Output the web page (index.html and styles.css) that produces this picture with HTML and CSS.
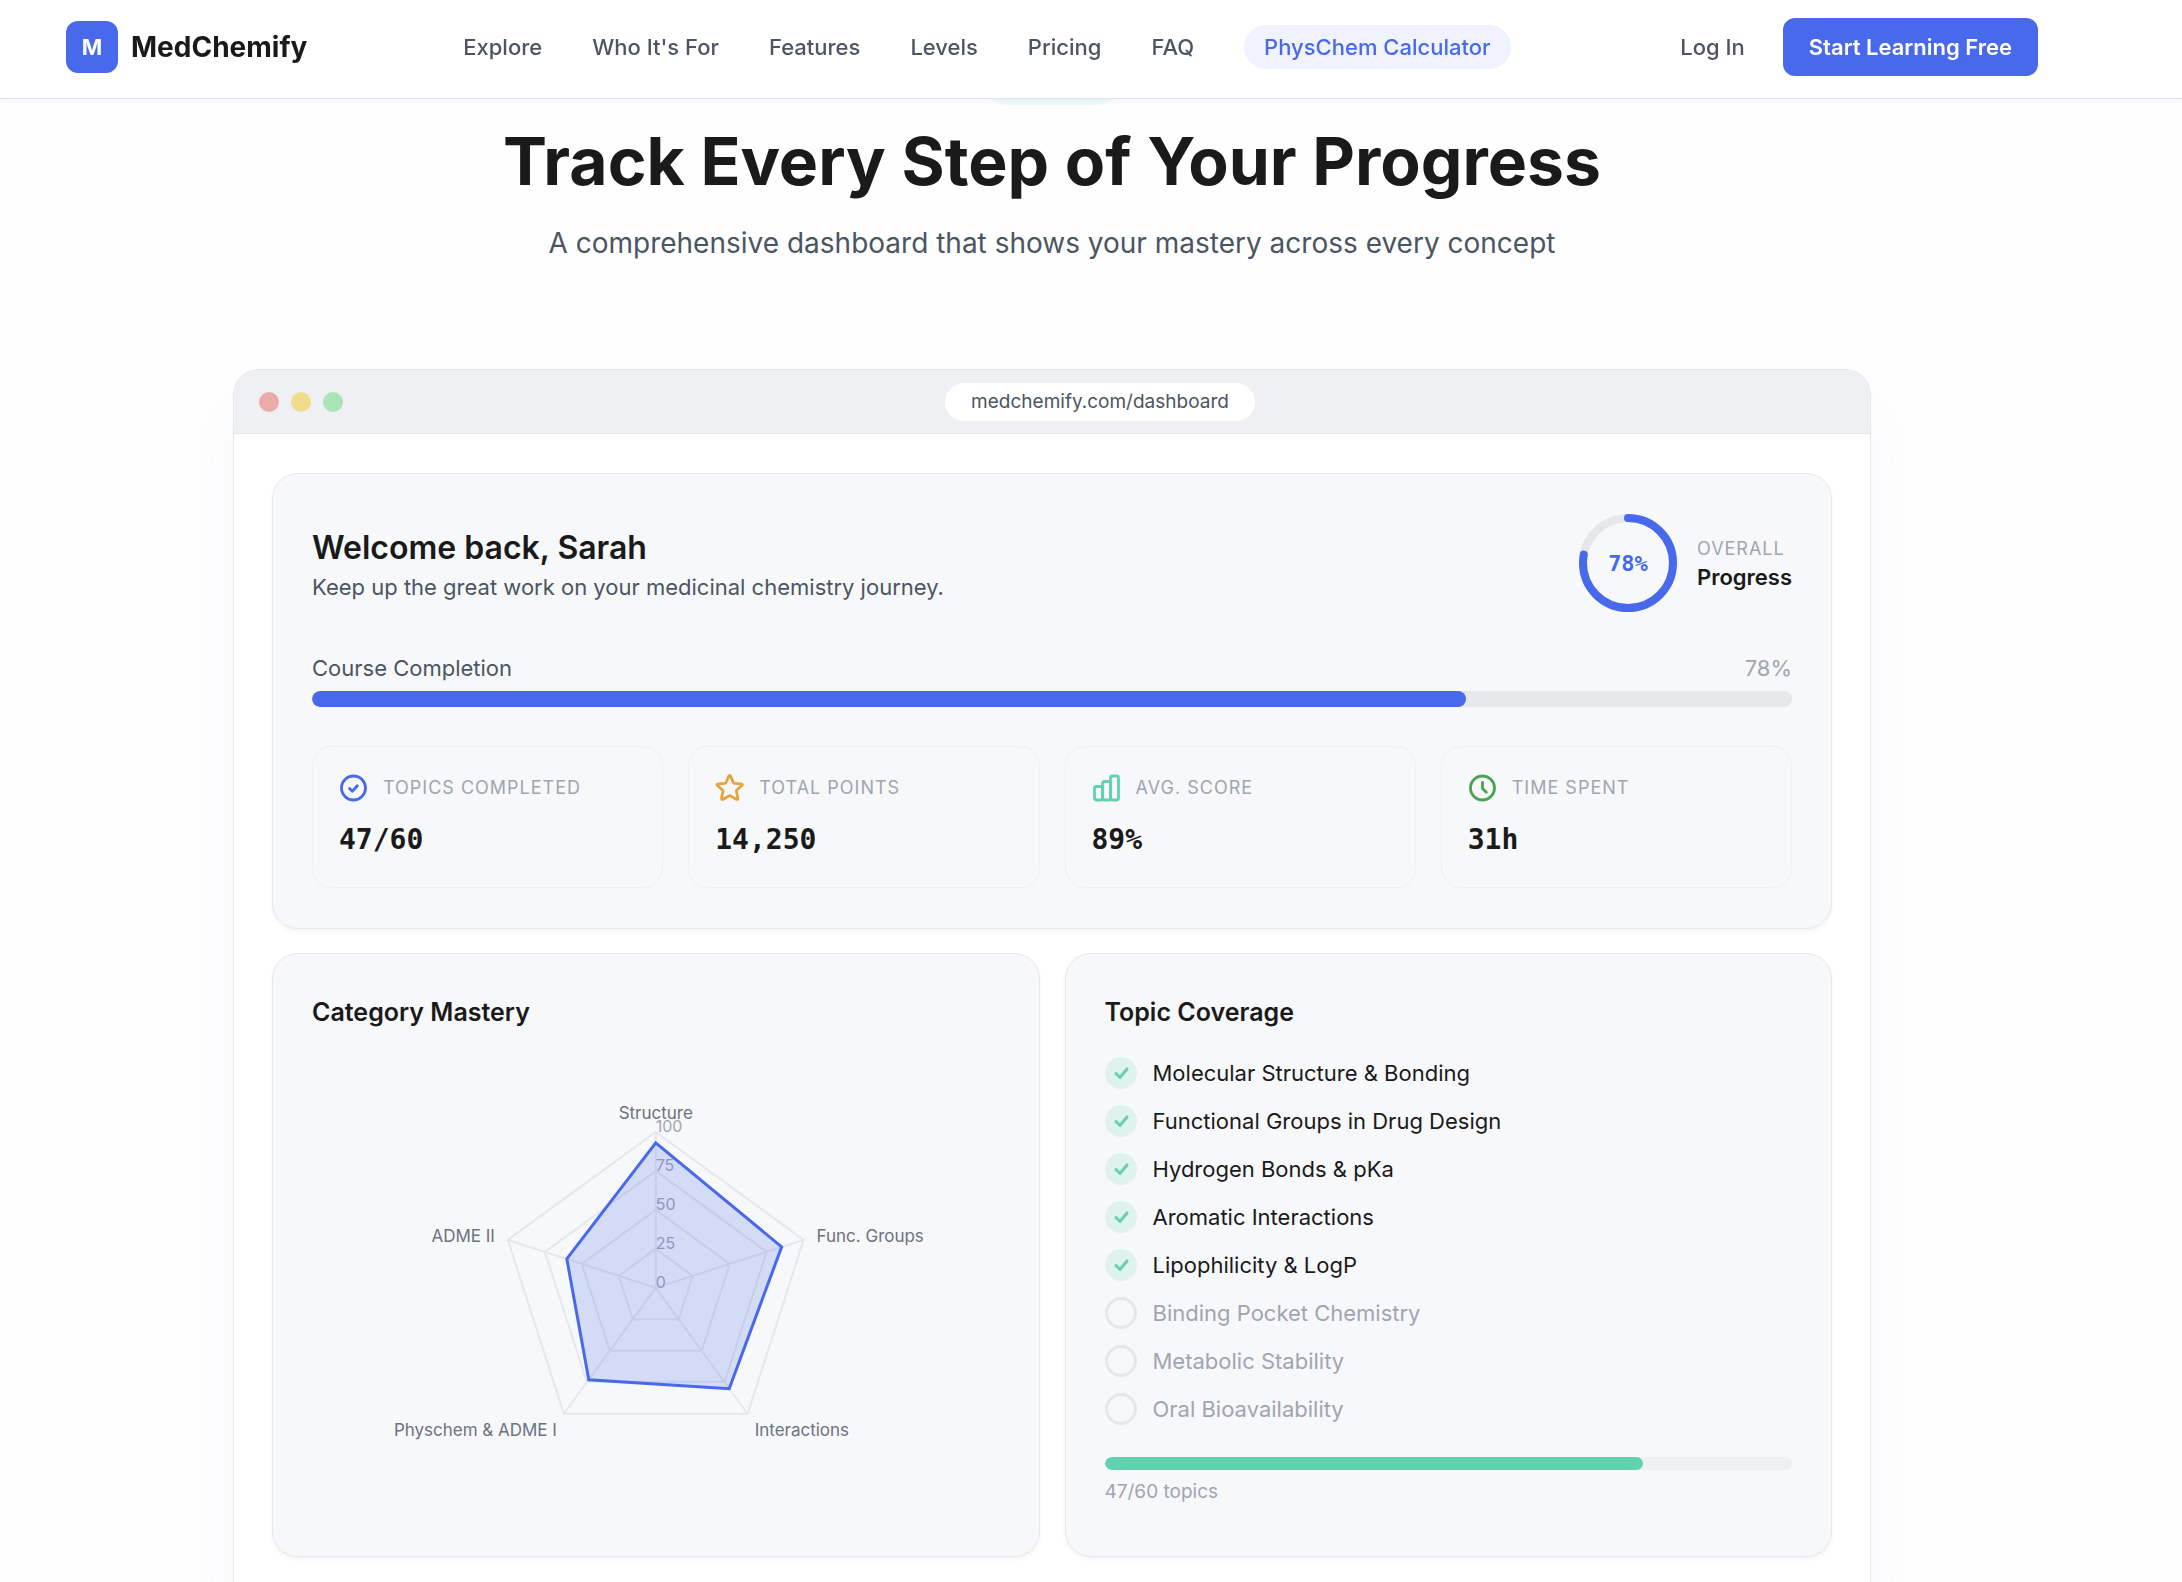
FILE: index.html
```html
<!DOCTYPE html>
<html lang="en">
<head>
<meta charset="utf-8">
<title>MedChemify</title>
<link rel="stylesheet" href="styles.css">
</head>
<body>
<header class="site-header">
  <a class="brand" href="#"><span class="brand-mark">M</span><span>MedChemify</span></a>
  <nav class="nav">
    <a href="#">Explore</a>
    <a href="#">Who It's For</a>
    <a href="#">Features</a>
    <a href="#">Levels</a>
    <a href="#">Pricing</a>
    <a href="#">FAQ</a>
    <a class="nav-pill" href="#">PhysChem Calculator</a>
  </nav>
  <div class="actions">
    <a href="#">Log In</a>
    <button class="cta" type="button">Start Learning Free</button>
  </div>
</header>

<main class="showcase">
  <div class="badge"></div>
  <h1>Track Every Step of Your Progress</h1>
  <p class="lead">A comprehensive dashboard that shows your mastery across every concept</p>

  <section class="window">
    <div class="window-bar">
      <div class="dots"><i class="dot red"></i><i class="dot yellow"></i><i class="dot green"></i></div>
      <div class="url">medchemify.com/dashboard</div>
    </div>

    <div class="dashboard">
      <section class="card overview">
        <div class="welcome">
          <div>
            <h2>Welcome back, Sarah</h2>
            <p>Keep up the great work on your medicinal chemistry journey.</p>
          </div>
          <div class="overall">
            <svg class="ring" viewBox="0 0 98 98" role="img" aria-label="78%">
              <circle cx="49" cy="49" r="45" fill="none" stroke="#e5e7eb" stroke-width="8"/>
              <circle cx="49" cy="49" r="45" fill="none" stroke="#4869eb" stroke-width="8" stroke-linecap="round" pathLength="100" stroke-dasharray="78 100" transform="rotate(-90 49 49)"/>
              <text class="ring-text" x="49" y="57" text-anchor="middle">78%</text>
            </svg>
            <div>
              <div class="eyebrow">OVERALL</div>
              <div class="overall-name">Progress</div>
            </div>
          </div>
        </div>

        <div class="completion">
          <div class="completion-head"><span>Course Completion</span><span class="muted">78%</span></div>
          <div class="track"><div class="fill" style="width:78%"></div></div>
        </div>

        <div class="stats">
          <div class="stat">
            <div class="stat-head">
              <svg class="icon" viewBox="0 0 29 29" stroke="#4869eb"><circle cx="14.500" cy="14" r="12"/><path d="M10.500 14.500l2.800 2.800 5-5.600"/></svg>
              <span class="eyebrow">TOPICS COMPLETED</span>
            </div>
            <div class="value">47/60</div>
          </div>
          <div class="stat">
            <div class="stat-head">
              <svg class="icon" viewBox="0 0 29 29" stroke="#e8a33d"><path d="M13.700 2.300Q14.700 .5 15.700 2.300L18.300 8.500Q18.600 9.200 19.400 9.300L26 9.900Q28.200 10.200 26.700 11.700L21.800 16Q21.200 16.500 21.400 17.300L22.800 23.800Q23.100 26.200 21.100 25.200L15.500 21.900Q14.700 21.400 13.900 21.900L8.300 25.200Q6.300 26.200 6.600 23.800L8 17.300Q8.200 16.500 7.600 16L2.700 11.700Q1.200 10.200 3.400 9.900L10 9.300Q10.800 9.200 11.100 8.500Z"/></svg>
              <span class="eyebrow">TOTAL POINTS</span>
            </div>
            <div class="value">14,250</div>
          </div>
          <div class="stat">
            <div class="stat-head">
              <svg class="icon" viewBox="0 0 29 29" stroke="#62d1ae"><rect x="2.500" y="12.500" width="8" height="13.500" rx="2"/><rect x="10.500" y="7.500" width="8" height="18.500" rx="2"/><rect x="18.500" y="2" width="8" height="24" rx="2"/></svg>
              <span class="eyebrow">AVG. SCORE</span>
            </div>
            <div class="value">89%</div>
          </div>
          <div class="stat">
            <div class="stat-head">
              <svg class="icon" viewBox="0 0 29 29" stroke="#4ba352"><circle cx="14.500" cy="14" r="12"/><path d="M14.500 8.500v6l3.800 3.800"/></svg>
              <span class="eyebrow">TIME SPENT</span>
            </div>
            <div class="value">31h</div>
          </div>
        </div>
      </section>

      <div class="panels">
        <section class="card panel">
          <h3>Category Mastery</h3>
          <svg class="radar" viewBox="0 0 688 440" role="img" aria-label="Category Mastery">
            <g class="grid">
              <path d="M344 70L492 178L436 352L252 352L196 178z"/>
              <path d="M344 109L455 190L413 320L275 320L233 190z"/>
              <path d="M344 148L418 202L390 289L298 289L270 202z"/>
              <path d="M344 187L381 214L367 257.500L321 257.500L307 214z"/>
              <path d="M344 226V70M344 226L492 178M344 226L436 352M344 226L252 352M344 226L196 178"/>
            </g>
            <g class="ticks">
              <text x="344" y="70">100</text>
              <text x="344" y="109">75</text>
              <text x="344" y="148">50</text>
              <text x="344" y="187">25</text>
              <text x="344" y="226">0</text>
            </g>
            <path class="area" d="M344 81L470 185L417.500 327L277 318L255 197z"/>
            <g class="labels">
              <text x="344" y="57" text-anchor="middle">Structure</text>
              <text x="505" y="180">Func. Groups</text>
              <text x="443" y="374">Interactions</text>
              <text x="245" y="374" text-anchor="end">Physchem &amp; ADME I</text>
              <text x="183" y="180" text-anchor="end">ADME II</text>
            </g>
          </svg>
        </section>

        <section class="card panel">
          <h3>Topic Coverage</h3>
          <ul class="topics">
            <li><span class="mark done"><svg viewBox="0 0 32 32"><path d="M11 16.500l4 4L22 12"/></svg></span>Molecular Structure &amp; Bonding</li>
            <li><span class="mark done"><svg viewBox="0 0 32 32"><path d="M11 16.500l4 4L22 12"/></svg></span>Functional Groups in Drug Design</li>
            <li><span class="mark done"><svg viewBox="0 0 32 32"><path d="M11 16.500l4 4L22 12"/></svg></span>Hydrogen Bonds &amp; pKa</li>
            <li><span class="mark done"><svg viewBox="0 0 32 32"><path d="M11 16.500l4 4L22 12"/></svg></span>Aromatic Interactions</li>
            <li><span class="mark done"><svg viewBox="0 0 32 32"><path d="M11 16.500l4 4L22 12"/></svg></span>Lipophilicity &amp; LogP</li>
            <li class="muted"><span class="mark"></span>Binding Pocket Chemistry</li>
            <li class="muted"><span class="mark"></span>Metabolic Stability</li>
            <li class="muted"><span class="mark"></span>Oral Bioavailability</li>
          </ul>
          <div class="track thin"><div class="fill" style="width:78.300%"></div></div>
          <p class="topic-count">47/60 topics</p>
        </section>
      </div>
    </div>
  </section>
</main>
</body>
</html>
```
FILE: styles.css
```css
:root {
  --blue: #4869eb;
  --ink: #1a1a1a;
  --slate: #4b5563;
  --muted: #a0a5b1;
  --line: #e5e7eb;
  --soft: #f7f8fa;
  --teal: #62d1ae;
}

* { box-sizing: border-box; }

body {
  margin: 0;
  min-height: 100vh;
  display: flex;
  flex-direction: column;
  background: #fefefe;
  color: var(--ink);
  font-family: Inter, "Liberation Sans", sans-serif;
  font-size: 22px;
  line-height: 32px;
}

h1, h2, h3, p, ul { margin: 0; padding: 0; }
a { color: inherit; text-decoration: none; }

.site-header {
  position: relative;
  z-index: 1;
  display: flex;
  align-items: center;
  justify-content: space-between;
  padding: 18px 144px 22px 66px;
  border-bottom: 1px solid #e2e4ec;
  background: rgba(255, 255, 255, 0.95);
  backdrop-filter: blur(12px);
  box-shadow: 0 2px 6px rgba(72, 105, 235, 0.06);
  color: var(--slate);
  font-weight: 500;
  white-space: nowrap;
}

.brand {
  display: flex;
  align-items: center;
  gap: 13px;
  color: var(--ink);
  font-size: 28px;
  font-weight: 700;
}
.brand-mark {
  display: grid;
  place-items: center;
  width: 52px;
  height: 52px;
  border-radius: 12px;
  background: var(--blue);
  color: #fff;
  font-size: 22px;
}

.nav { display: flex; align-items: center; gap: 50px; margin-right: 14px; }
.nav-pill {
  padding: 6px 20px;
  border-radius: 24px;
  background: #f0f3fe;
  color: var(--blue);
}

.actions { display: flex; align-items: center; gap: 38px; }
.cta {
  padding: 13px 26px;
  border: 0;
  border-radius: 12px;
  background: var(--blue);
  color: #fff;
  font: inherit;
  font-weight: 600;
}

.showcase {
  flex: 1;
  display: flex;
  flex-direction: column;
  align-items: center;
  padding: 0 78px 0 0;
}
.badge {
  width: 138px;
  height: 46px;
  margin-top: -40px;
  border-radius: 23px;
  background: #eff9f8;
}
h1 {
  margin-top: 12px;
  font-size: 66px;
  line-height: 88px;
  font-weight: 700;
}
.lead {
  margin-top: 18px;
  color: var(--slate);
  font-size: 28px;
  line-height: 40px;
}

.window {
  flex: 1;
  width: calc(100% - 466px);
  max-width: 1638px;
  margin-top: 106px;
  border: 1px solid var(--line);
  border-bottom: 0;
  border-radius: 26px 26px 0 0;
  background: #fff;
  box-shadow: 0 40px 60px rgba(72, 105, 235, 0.04);
  overflow: hidden;
}
.window-bar {
  display: grid;
  grid-template-columns: 96px 1fr;
  align-items: center;
  padding: 13px 25px 12px;
  border-bottom: 1px solid var(--line);
  background: #eff0f4;
}
.dots { display: flex; gap: 12px; }
.dot { width: 20px; height: 20px; border-radius: 50%; }
.red { background: #ebaaa8; }
.yellow { background: #f2dc8c; }
.green { background: #a9e4b5; }
.url {
  justify-self: center;
  padding: 3px 26px;
  border-radius: 19px;
  background: #fff;
  color: var(--slate);
  font-size: 19px;
}

.dashboard {
  display: flex;
  flex-direction: column;
  gap: 24px;
  padding: 39px 38px 24px;
}
.card {
  padding: 40px 39px;
  border: 1px solid var(--line);
  border-radius: 26px;
  background: var(--soft);
  box-shadow: 0 2px 4px rgba(0, 0, 0, 0.05);
}

.welcome { display: flex; justify-content: space-between; align-items: center; }
h2 { font-size: 32px; line-height: 48px; font-weight: 600; }
.welcome p { color: var(--slate); }
.welcome { line-height: 30px; }
.overall { display: flex; align-items: center; gap: 20px; line-height: 28px; }
.ring { width: 98px; height: 98px; }
.ring-text {
  fill: var(--blue);
  font-family: "DejaVu Sans Mono", monospace;
  font-size: 22px;
  font-weight: 700;
}
.eyebrow { color: var(--muted); font-size: 18px; letter-spacing: 1px; }
.overall-name { font-weight: 600; }

.completion { margin-top: 40px; color: var(--slate); }
.completion-head { display: flex; justify-content: space-between; }
.muted { color: var(--muted); }
.track {
  height: 16px;
  margin-top: 7px;
  border-radius: 8px;
  background: var(--line);
  overflow: hidden;
}
.fill { height: 100%; border-radius: 8px; background: var(--blue); }

.stats {
  display: grid;
  grid-template-columns: repeat(4, 1fr);
  gap: 25px;
  margin-top: 39px;
}
.stat {
  padding: 25px 26px 27px;
  border: 1px solid #eff0f3;
  border-radius: 20px;
}
.stat-head { display: flex; align-items: center; gap: 15px; }
.icon {
  width: 29px;
  height: 29px;
  fill: none;
  stroke-width: 2.8;
  stroke-linecap: round;
  stroke-linejoin: round;
}
.value {
  margin-top: 16px;
  font-family: "DejaVu Sans Mono", monospace;
  font-size: 28px;
  line-height: 40px;
  font-weight: 700;
}

.panels { display: grid; grid-template-columns: 1fr 1fr; gap: 25px; }
.panel { padding-bottom: 48px; }
h3 { font-size: 25px; line-height: 36px; font-weight: 600; }
.radar { display: block; width: 100%; margin-top: 32px; }
.grid { fill: none; stroke: #e5e7eb; stroke-width: 2; }
.ticks { fill: var(--muted); font-size: 16px; }
.labels { fill: #6b7280; font-size: 17px; }
.area { fill: rgba(72, 105, 235, 0.2); stroke: var(--blue); stroke-width: 3; }

.topics {
  display: flex;
  flex-direction: column;
  gap: 16px;
  margin-top: 27px;
  list-style: none;
}
.topics li { display: flex; align-items: center; gap: 16px; }
.mark {
  width: 32px;
  height: 32px;
  border: 3px solid var(--line);
  border-radius: 50%;
}
.mark.done { border: 0; background: #e0f2ed; }
.mark svg {
  display: block;
  fill: none;
  stroke: var(--teal);
  stroke-width: 3;
  stroke-linecap: round;
  stroke-linejoin: round;
}
.thin { height: 13px; margin-top: 32px; background: #eff0f3; }
.thin .fill { background: var(--teal); }
.topic-count { margin-top: 6px; color: var(--muted); font-size: 19px; }
```
